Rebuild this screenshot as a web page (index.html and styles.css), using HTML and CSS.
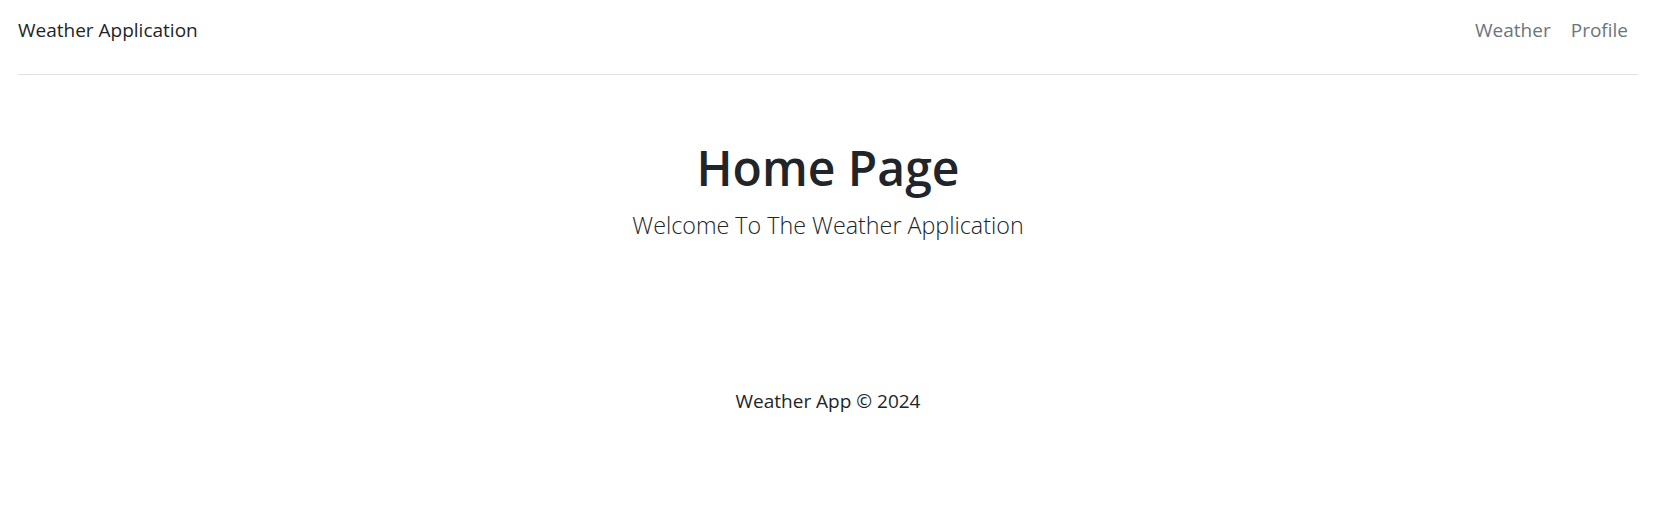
FILE: index.html
```html
<!DOCTYPE html>
<html lang="en">
<head>
<meta charset="utf-8">
<title>Weather Application</title>
<link rel="stylesheet" href="styles.css">
</head>
<body>
<div class="page">
  <header class="header">
    <a class="brand" href="#">Weather Application</a>
    <nav class="nav">
      <a class="nav-link" href="#">Weather</a>
      <a class="nav-link" href="#">Profile</a>
    </nav>
  </header>
  <main class="hero">
    <h1 class="title">Home Page</h1>
    <p class="lead">Welcome To The Weather Application</p>
  </main>
  <footer class="footer">
    <p class="copy">Weather App © 2024</p>
  </footer>
</div>
</body>
</html>
```
FILE: styles.css
```css
html, body {
  margin: 0;
  padding: 0;
  background: #ffffff;
}
body {
  font-family: "Open Sans", "Noto Sans", sans-serif;
  color: #212529;
}
.page {
  padding: 0 29px 0 18px;
}
.header {
  display: flex;
  align-items: flex-start;
  justify-content: space-between;
  height: 74px;
  box-sizing: content-box;
  border-bottom: 1px solid #dee2e6;
}
.brand {
  margin-top: 15px;
  font-size: 19px;
  line-height: 30px;
  color: #212529;
  text-decoration: none;
}
.nav {
  display: flex;
  margin-top: 15px;
}
.nav-link {
  font-size: 19px;
  line-height: 30px;
  padding: 0 10px 0 10px;
  color: #6c757d;
  text-decoration: none;
}
.hero {
  text-align: center;
}
.title {
  margin: 64px 0 0;
  font-size: 48px;
  line-height: 58px;
  font-weight: 600;
}
.lead {
  margin: 11px 0 0;
  font-size: 23.3px;
  line-height: 34px;
  font-weight: 300;
}
.footer {
  text-align: center;
}
.copy {
  margin: 145px 0 0;
  font-size: 19px;
  line-height: 28px;
}
```
